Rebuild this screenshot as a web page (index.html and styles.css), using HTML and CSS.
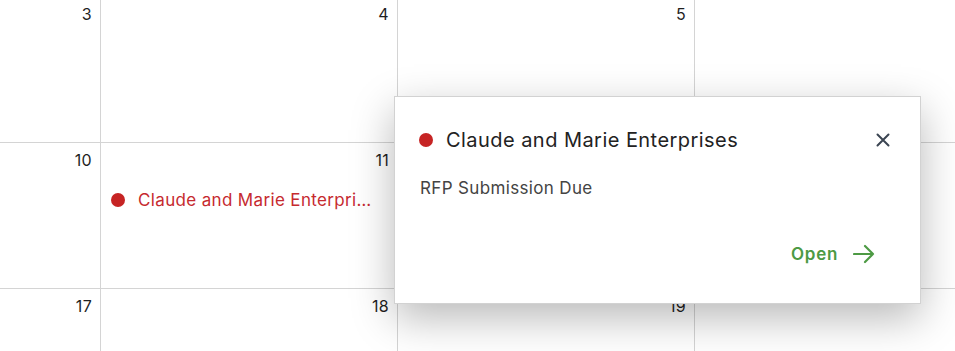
FILE: index.html
```html
<!DOCTYPE html>
<html lang="en">
<head>
<meta charset="utf-8">
<title>Calendar</title>
<link rel="stylesheet" href="styles.css">
</head>
<body>
<div class="calendar">
  <div class="cell"><div class="day">3</div></div>
  <div class="cell"><div class="day">4</div></div>
  <div class="cell"><div class="day">5</div></div>
  <div class="cell"></div>
  <div class="cell"><div class="day">10</div></div>
  <div class="cell">
    <div class="day">11</div>
    <div class="event"><span class="dot"></span><span class="event-title">Claude and Marie Enterprises</span></div>
  </div>
  <div class="cell"></div>
  <div class="cell"></div>
  <div class="cell"><div class="day">17</div></div>
  <div class="cell"><div class="day">18</div></div>
  <div class="cell"><div class="day">19</div></div>
  <div class="cell"></div>
</div>

<div class="popup">
  <div class="popup-head">
    <span class="dot"></span>
    <span class="popup-title">Claude and Marie Enterprises</span>
    <button class="close" aria-label="Close">
      <svg width="14" height="14" viewBox="0 0 14 14"><path d="M1.5 1.5 L12.5 12.5 M12.5 1.5 L1.5 12.5" stroke="#3b4552" stroke-width="2" stroke-linecap="round" fill="none"/></svg>
    </button>
  </div>
  <div class="popup-body">RFP Submission Due</div>
  <div class="popup-foot">
    <a class="open" href="#">Open
      <svg width="22" height="20" viewBox="0 0 22 20"><path d="M1 10 H20 M12 2 L20 10 L12 18" stroke="#4d9a44" stroke-width="2.2" stroke-linecap="round" stroke-linejoin="round" fill="none"/></svg>
    </a>
  </div>
</div>
</body>
</html>
```

FILE: styles.css
```css
html, body {
  margin: 0;
  padding: 0;
  overflow: hidden;
  height: 351px;
  background: #fff;
  font-family: Inter, "Noto Sans", sans-serif;
  color: #222;
}

.calendar {
  display: grid;
  grid-template-columns: repeat(4, 297px);
  grid-auto-rows: 146px;
  margin-left: -196px;
  margin-top: -3px;
  width: max-content;
}

.cell {
  box-sizing: border-box;
  border-right: 1px solid #d4d4d4;
  border-bottom: 1px solid #d4d4d4;
  padding: 8px 8px 0 10px;
  min-width: 0;
}

.day {
  text-align: right;
  font-size: 16px;
  line-height: 19px;
  color: #1f1f1f;
  letter-spacing: 0.3px;
}

.event {
  display: flex;
  align-items: center;
  gap: 13px;
  margin-top: 20px;
  font-size: 17px;
  letter-spacing: 0.35px;
  line-height: 20px;
  color: #c62a2f;
  min-width: 0;
}

.event-title {
  white-space: nowrap;
  overflow: hidden;
  text-overflow: ellipsis;
  min-width: 0;
  padding-right: 12px;
}

.dot {
  flex: none;
  width: 14px;
  height: 14px;
  border-radius: 50%;
  background: #c62424;
}

.popup {
  position: absolute;
  left: 394px;
  top: 96px;
  width: 527px;
  height: 208px;
  box-sizing: border-box;
  background: #fff;
  border: 1px solid #d2d2d2;
  box-shadow: 0 14px 40px rgba(0, 0, 0, 0.28);
  padding: 32px 30px 0 24px;
  display: flex;
  flex-direction: column;
}

.popup-head {
  display: flex;
  align-items: center;
  gap: 13px;
  height: 22px;
}

.popup-title {
  flex: 1;
  font-size: 20px;
  letter-spacing: 0.45px;
  line-height: 22px;
  color: #222;
}

.close {
  border: 0;
  background: none;
  padding: 0;
  width: 14px;
  height: 14px;
  display: flex;
  cursor: pointer;
}

.popup-body {
  margin-top: 27px;
  padding-left: 1px;
  font-size: 17px;
  letter-spacing: 0.35px;
  line-height: 20px;
  color: #444;
}

.popup-foot {
  margin-top: auto;
  margin-bottom: 39px;
  display: flex;
  justify-content: flex-end;
}

.open {
  display: flex;
  align-items: center;
  gap: 15px;
  margin-right: 15px;
  font-size: 17px;
  font-weight: 600;
  letter-spacing: 0.7px;
  color: #4d9a44;
  text-decoration: none;
}
```
